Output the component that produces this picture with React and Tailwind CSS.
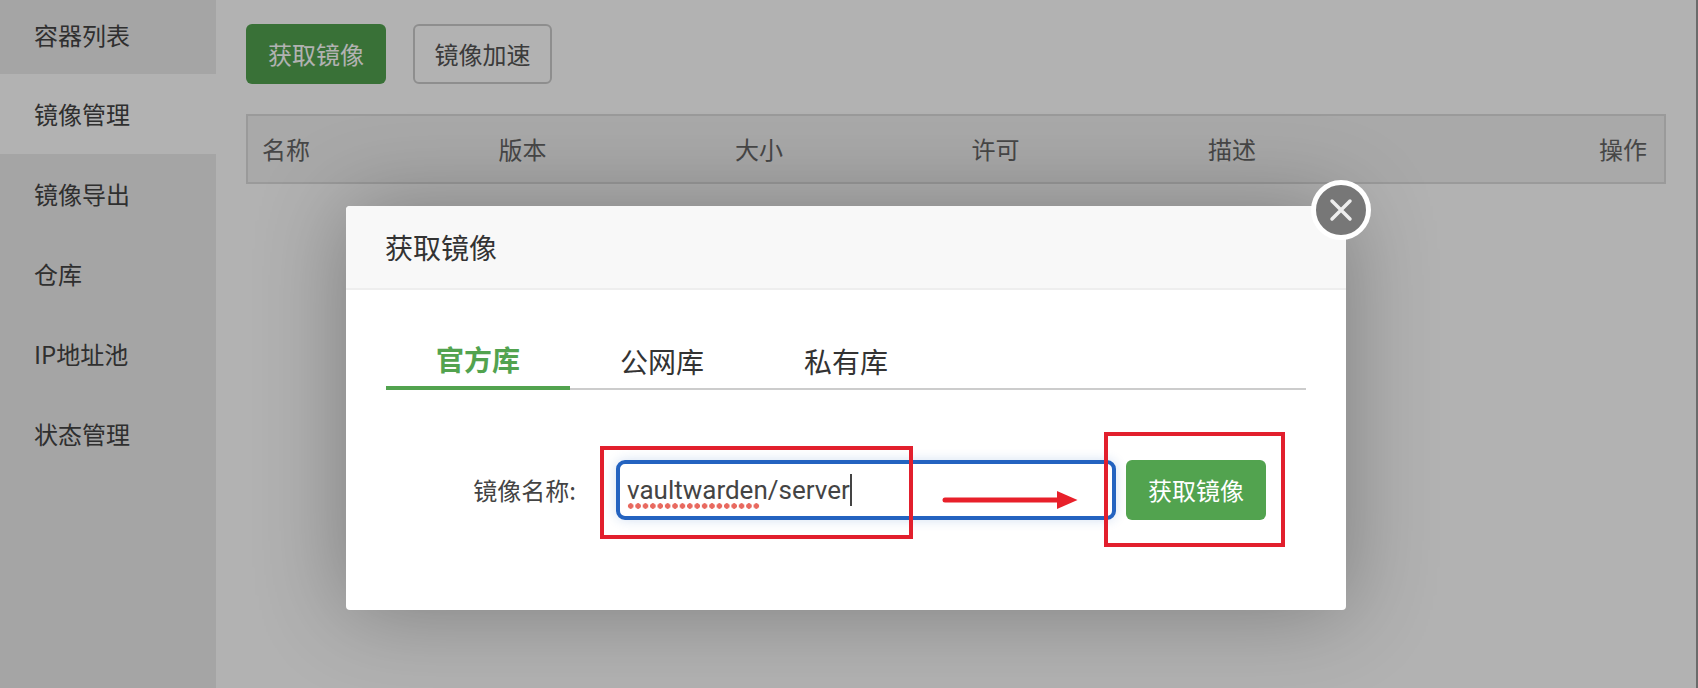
const sideItems = ['容器列表', '镜像管理', '镜像导出', '仓库', 'IP地址池', '状态管理']
const columns = ['名称', '版本', '大小', '许可', '描述']
const tabs = ['官方库', '公网库', '私有库']

function Sidebar() {
  return (
    <aside className="w-[216px] shrink-0 bg-[#ececec]">
      {sideItems.map((item) => (
        <div
          key={item}
          className={`h-[80px] pl-[34px] flex items-center text-[24px] text-[#444] first:h-[74px] first:pb-[4px] ${
            item === '镜像管理' ? 'bg-white' : ''
          }`}
        >
          {item}
        </div>
      ))}
    </aside>
  )
}

function Arrow() {
  return (
    <svg className="absolute left-[942px] top-[488px]" width="136" height="24" viewBox="0 0 136 24">
      <path d="M3 12H118" stroke="#e8202a" strokeWidth="5" strokeLinecap="round" />
      <path d="M115 3L135.5 12L115 21Z" fill="#e8202a" />
    </svg>
  )
}

function Modal() {
  return (
    <div className="absolute left-[346px] top-[206px] w-[1000px] h-[404px] bg-white rounded-[4px] shadow-[0_0_90px_rgba(0,0,0,0.3)]">
      <div className="h-[84px] px-[39px] flex items-center bg-[#f8f8f8] border-b-2 border-[#eee] rounded-t-[4px] text-[28px] text-[#333]">
        获取镜像
      </div>
      <div className="mx-[40px] mt-[42px] flex border-b-2 border-[#ccc] h-[58px]">
        {tabs.map((tab, i) => (
          <div
            key={tab}
            className={`w-[184px] h-[58px] flex items-center justify-center text-[28px] ${
              i === 0 ? 'font-bold text-[#52a34f] border-b-4 border-[#52a34f]' : 'text-[#333]'
            }`}
          >
            {tab}
          </div>
        ))}
      </div>
      <div className="mt-[70px] flex items-center">
        <label className="w-[230px] text-right text-[24px] text-[#444]">镜像名称:</label>
        <div className="ml-[40px] w-[500px] h-[60px] border-4 border-[#2463c0] rounded-[9px] shadow-[0_0_12px_rgba(36,99,192,0.2)] pl-[7px] flex items-center text-[26px] text-[#444] font-['Roboto',sans-serif]">
          <span className="relative">
            vaultwarden
            <span className="absolute left-0 w-[133px] bottom-[1px] h-[6px] bg-[radial-gradient(circle,#e8695f_2.5px,transparent_3px)] bg-[length:7.4px_6px]" />
          </span>
          <span>/server</span>
          <span className="w-[2px] h-[32px] bg-[#444]" />
        </div>
        <button className="ml-[10px] w-[140px] h-[60px] rounded-[6px] bg-[#52a34f] text-white text-[24px]">获取镜像</button>
      </div>
      <div className="absolute -right-[25px] -top-[26px] w-[60px] h-[60px] rounded-full border-[5px] border-white bg-[#777] flex items-center justify-center">
        <svg width="28" height="28" viewBox="0 0 28 28" fill="none" stroke="#eee" strokeWidth="3.5" strokeLinecap="round">
          <path d="M5 5L23 23M23 5L5 23" />
        </svg>
      </div>
    </div>
  )
}

export default function App() {
  return (
    <div className="relative w-[1698px] h-[688px] overflow-hidden flex bg-white font-['Noto_Sans_CJK_SC','Noto_Sans',sans-serif]">
      <Sidebar />
      <main className="flex-1 pl-[30px] pr-[32px] pt-[24px]">
        <div className="flex gap-[27px]">
          <button className="w-[140px] h-[60px] rounded-[6px] bg-[#52a34f] text-white text-[24px]">获取镜像</button>
          <button className="w-[139px] h-[60px] rounded-[6px] border-2 border-[#ccc] text-[#555] text-[24px]">镜像加速</button>
        </div>
        <div className="mt-[30px] h-[70px] border-2 border-[#ddd] bg-[#f2f2f2] flex items-center pl-[14px] pr-[17px] text-[24px] text-[#666]">
          {columns.map((col) => (
            <div key={col} className="w-[236.5px]">{col}</div>
          ))}
          <div className="ml-auto">操作</div>
        </div>
      </main>
      <div className="absolute inset-0 bg-black/30" />
      <Modal />
      <div className="absolute left-[600px] top-[446px] w-[313px] h-[93px] border-4 border-[#e21f2d]" />
      <div className="absolute left-[1104px] top-[432px] w-[181px] h-[115px] border-4 border-[#e21f2d]" />
      <Arrow />
      <div className="absolute right-0 inset-y-0 w-[2px] bg-[#6b6b6b]" />
    </div>
  )
}
